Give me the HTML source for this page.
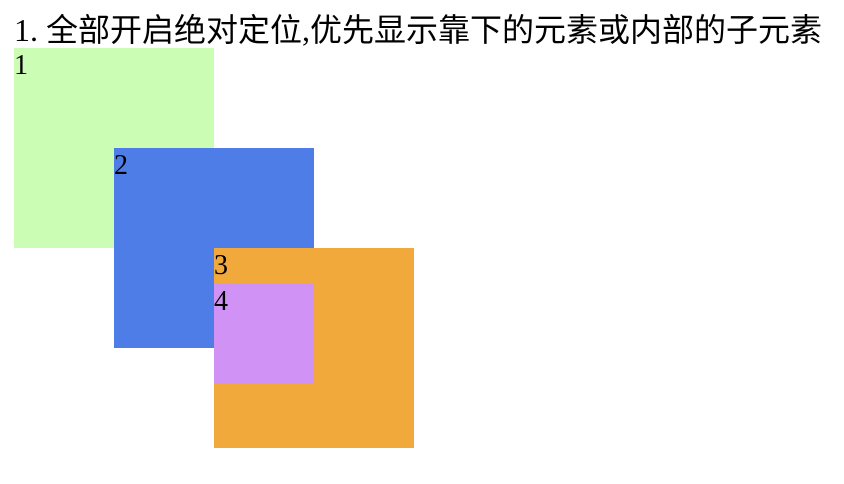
<!DOCTYPE html>
<html><head><meta charset="utf-8"><style>
html,body{margin:0;padding:0;background:#fff;}
body{width:844px;height:484px;position:relative;overflow:hidden;font-family:"Liberation Serif","Noto Sans CJK SC",serif;}
h1{position:absolute;left:14px;top:12px;margin:0;font-size:32px;font-weight:normal;line-height:36px;white-space:nowrap;color:#000;}
.b{position:absolute;width:200px;height:200px;font-size:28px;line-height:36px;color:#000;}
</style></head><body>
<h1>1. 全部开启绝对定位,优先显示靠下的元素或内部的子元素</h1>
<div class="b" style="left:14px;top:48px;background:#ccfdb4;">1</div>
<div class="b" style="left:114px;top:148px;background:#4e7de8;">2</div>
<div class="b" style="left:214px;top:248px;background:#f2a93b;">3
<div class="b" style="left:0;top:36px;width:100px;height:100px;background:#d093f5;">4</div></div>
</body></html>
